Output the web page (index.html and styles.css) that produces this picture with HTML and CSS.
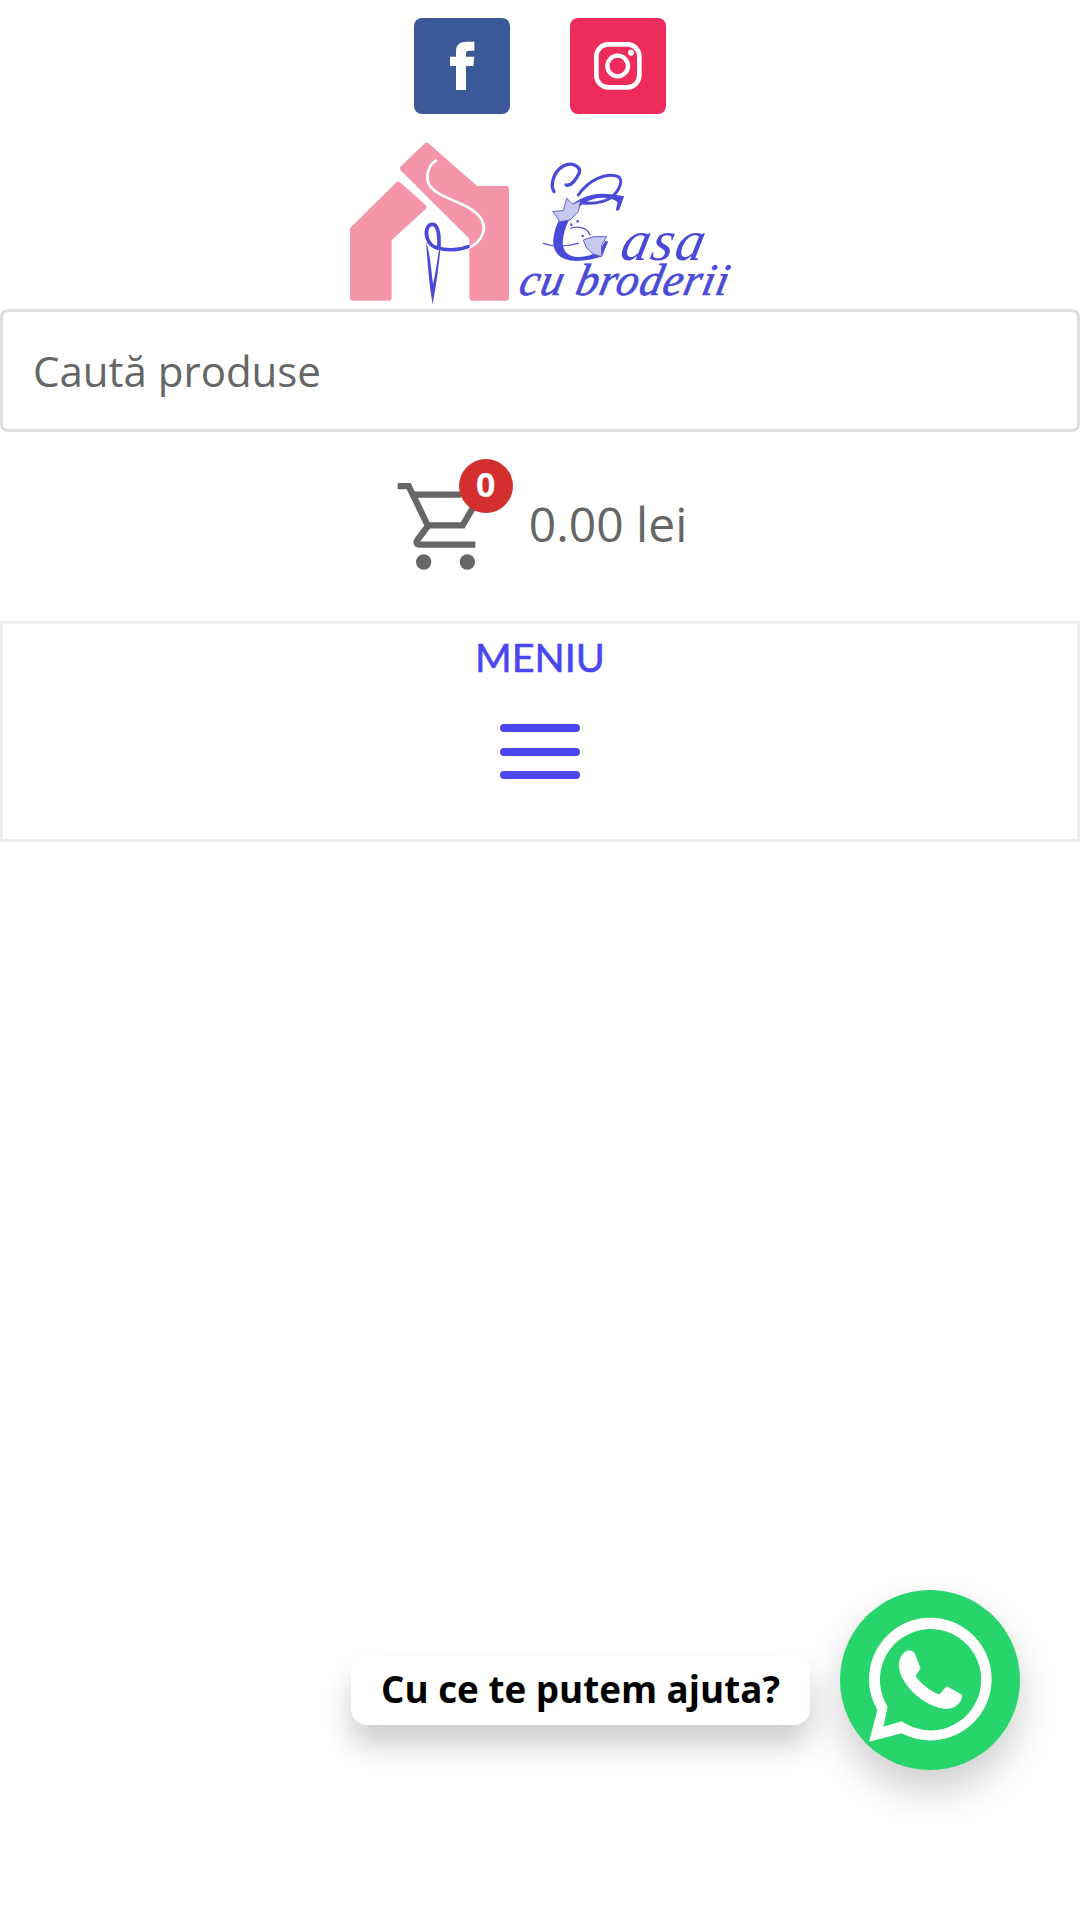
FILE: index.html
```html
<!DOCTYPE html>
<html lang="ro">
<head>
<meta charset="utf-8">
<title>Casa cu broderii</title>
<link rel="stylesheet" href="styles.css">
</head>
<body>
<header class="header">
  <div class="social">
    <a class="social-btn fb" aria-label="Facebook">
      <svg viewBox="0 0 288 288" class="social-icon"><path fill="#fff" d="M126 216V144H108V116H126V100C126 80 138 71 158 71H181V98H165C158 98 156 101 156 107V116H181L178 144H156V216Z"/></svg>
    </a>
    <a class="social-btn ig" aria-label="Instagram">
      <svg viewBox="0 0 288 288" class="social-icon"><rect x="79" y="79" width="129" height="129" rx="36" fill="none" stroke="#fff" stroke-width="14"/><circle cx="143" cy="144" r="31" fill="none" stroke="#fff" stroke-width="13"/><circle cx="183" cy="104" r="9" fill="#fff"/></svg>
    </a>
  </div>
  <div class="logo">
    <svg class="logo-svg" viewBox="0 0 1260 540" role="img" aria-label="Casa cu broderii">
      <path fill="#f495a9" stroke="#f495a9" stroke-width="18" stroke-linejoin="round" d="M69 298L205 164L280 231L176 326V503H69Z"/>
      <path fill="#f495a9" stroke="#f495a9" stroke-width="18" stroke-linejoin="round" d="M219 115L290 47L438 177H528V503H427V322Z"/>
      <path fill="none" stroke="#fff" stroke-width="8" stroke-linecap="round" d="M318 92C295 105 285 140 298 165C315 195 375 210 420 235C455 258 468 285 458 312C450 332 435 345 418 352"/>
      <path fill="none" stroke="#4a4ad8" stroke-width="10" stroke-linecap="round" d="M320 352C345 362 385 362 415 350"/>
      <path fill="none" stroke="#4a4ad8" stroke-width="11" d="M326 355C330 320 324 283 308 283C292 282 285 305 292 325C297 342 310 352 326 355"/>
      <path fill="#4a4ad8" d="M288 335C293 400 298 470 308 522C318 470 328 400 332 345C324 360 320 420 309 462C303 420 301 370 288 335Z"/>
      <text class="logo-title" transform="skewX(-12)" x="722" y="390"><tspan class="logo-cap">C</tspan><tspan class="logo-word" dx="26">asa</tspan></text>
      <text class="logo-sub" transform="skewX(-12)" x="668" y="495" textLength="625" lengthAdjust="spacing">cu broderii</text>
      <path fill="none" stroke="#4a4ad8" stroke-width="10" stroke-linecap="round" d="M708 165C722 170 738 150 748 128C752 108 725 95 700 108C670 125 660 165 672 185"/>
      <path fill="none" stroke="#4a4ad8" stroke-width="9" stroke-linecap="round" d="M745 195C775 150 830 125 865 140C885 155 860 205 815 215C790 222 770 220 755 218"/>
      <path fill="#c7c9ee" stroke="#5f5fcf" stroke-width="3" stroke-linejoin="round" d="M668 244L700 242L710 205L728 222L752 212L745 245L720 270L690 275Z"/>
      <path fill="#c7c9ee" stroke="#5f5fcf" stroke-width="3" stroke-linejoin="round" d="M760 330L790 320L830 320L815 345L815 380L790 372L770 355Z"/>
      <path fill="none" stroke="#5a58dc" stroke-width="4" stroke-linecap="round" d="M640 340C670 352 700 352 745 340M722 295C740 288 770 290 780 315"/>
      <circle cx="743" cy="274" r="4" fill="#5a58dc"/><circle cx="724" cy="284" r="4" fill="#5a58dc"/><circle cx="758" cy="318" r="4" fill="#5a58dc"/>
    </svg>
  </div>
  <div class="search"><span class="search-text">Caută produse</span></div>
  <div class="cart-row">
    <div class="cart">
      <svg class="cart-icon" viewBox="47 98 300 261">
        <g fill="none" stroke="#666" stroke-width="19">
          <path d="M55 107H88L145 225H250L285 165"/>
          <path d="M105 133H245"/>
          <path d="M145 228L115 268Q105 283 125 283H288"/>
        </g>
        <circle cx="133" cy="335" r="23" fill="#666"/>
        <circle cx="264" cy="335" r="23" fill="#666"/>
      </svg>
      <span class="badge">0</span>
    </div>
    <span class="price">0.00 lei</span>
  </div>
  <nav class="menu">
    <div class="menu-title">MENIU</div>
    <div class="burger"><span class="bar"></span><span class="bar"></span><span class="bar"></span></div>
  </nav>
</header>
<aside class="chat">
  <div class="chat-label">Cu ce te putem ajuta?</div>
  <div class="chat-btn">
    <svg viewBox="0 0 720 720" class="chat-icon">
      <path fill="#fff" fill-rule="evenodd" d="M147 515L172 420A184 184 0 1 1 245 490ZM190 470L203 410A152 152 0 1 1 245 454Z"/>
      <path fill="#fff" stroke="#fff" stroke-width="3" d="M265 243C250 245 238 265 238 285C238 320 270 365 310 390C340 410 370 418 390 414C410 410 425 395 425 375L380 350L358 375C330 365 300 340 285 318L300 295L283 250C280 245 272 242 265 243Z"/>
    </svg>
  </div>
</aside>
</body>
</html>
```
FILE: styles.css
```css
* { box-sizing: border-box; }
html, body { margin: 0; padding: 0; background: #fff; }
body { width: 1080px; height: 1920px; font-family: "Open Sans", sans-serif; color: #666; overflow: hidden; position: relative; }

.social { display: flex; justify-content: center; gap: 60px; padding-top: 18px; }
.social-btn { display: block; width: 96px; height: 96px; border-radius: 8px; }
.social-icon { display: block; width: 96px; height: 96px; }
.fb { background: #3b5998; }
.ig { background: #ee2c5c; }

.logo { display: flex; justify-content: center; margin-top: 16px; height: 179px; }
.logo-svg { display: block; width: 420px; height: 180px; flex: none; }
.logo-title, .logo-sub { font-family: "Liberation Serif", serif; font-style: italic; fill: #4a4ad8; }
.logo-cap { font-size: 300px; }
.logo-word { font-size: 172px; letter-spacing: 5px; }
.logo-sub { font-size: 135px; stroke: #4a4ad8; stroke-width: 2px; }

.search { height: 123px; border: 3px solid #ddd; border-radius: 8px; padding-left: 30px; display: flex; align-items: center; }
.search-text { font-size: 42px; color: #666; }

.cart-row { display: flex; justify-content: center; align-items: center; height: 189px; padding-left: 5px; }
.cart { position: relative; width: 131px; height: 87px; }
.cart-icon { display: block; width: 100px; height: 87px; margin-left: -3px; }
.badge { position: absolute; left: 61px; top: -24px; width: 54px; height: 54px; border-radius: 50%; background: #d32f2f; color: #fff; font-size: 34px; font-weight: 700; line-height: 50px; display: flex; align-items: flex-start; justify-content: center; }
.price { font-size: 48px; line-height: 66px; color: #666; margin-top: -5px; }

.menu { height: 221px; border: 3px solid #eee; display: flex; flex-direction: column; align-items: center; padding-top: 13px; }
.menu-title { font-family: Lato, sans-serif; font-size: 39.5px; line-height: 40px; font-weight: 400; color: #4a46f0; -webkit-text-stroke: 0.6px #4a46f0; }
.burger { display: flex; flex-direction: column; gap: 15.5px; margin-top: 47px; }
.bar { display: block; width: 80px; height: 8px; border-radius: 4px; background: #4a46f0; }

.chat { position: absolute; right: 60px; top: 1590px; display: flex; gap: 30px; align-items: flex-start; }
.chat-label { margin-top: 66px; width: 459px; height: 69px; padding-bottom: 4px; background: #fff; border-radius: 16px; box-shadow: 0 20px 30px rgba(0,0,0,.2); color: #000; font-weight: 700; font-size: 36.8px; display: flex; align-items: center; justify-content: center; }
.chat-btn { width: 180px; height: 180px; border-radius: 50%; background: #27d56a; box-shadow: 0 20px 40px rgba(0,0,0,.2); position: relative; }
.chat-icon { position: absolute; left: -20px; top: -20px; width: 240px; height: 240px; }
```
